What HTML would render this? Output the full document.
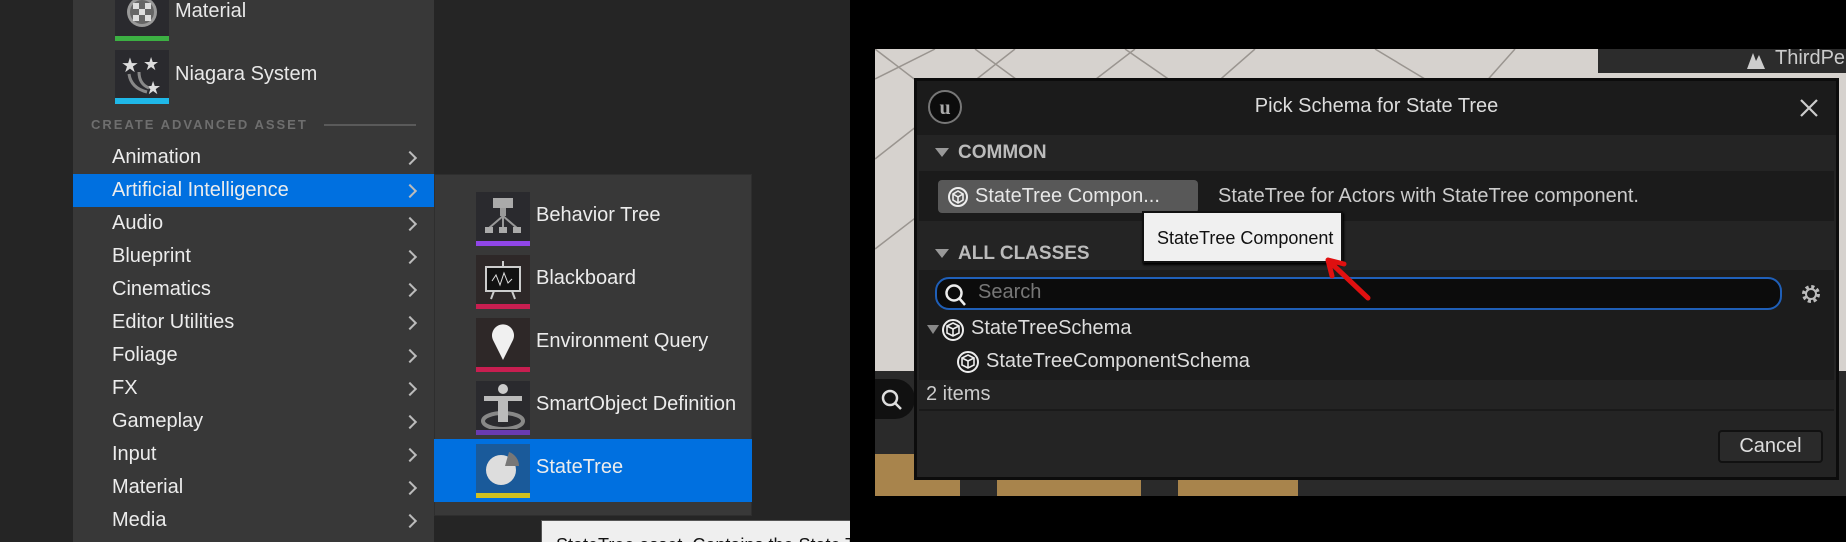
<!DOCTYPE html>
<html><head><meta charset="utf-8"><style>
*{margin:0;padding:0;box-sizing:border-box}
html,body{width:1846px;height:542px;overflow:hidden}
body{background:#000;font-family:"Liberation Sans",sans-serif;position:relative}
.a{position:absolute}
.t{color:#e8e8e8;font-size:20px;white-space:nowrap}
.row{position:absolute;left:73px;width:361px;height:33px}
.row span{position:absolute;left:39px;top:5px;color:#ececec;font-size:20px}
.row i{position:absolute;left:332px;top:12px;width:10px;height:10px;border-right:2px solid #bbb;border-top:2px solid #bbb;transform:rotate(45deg)}
.ic{position:absolute;left:476px;width:54px;height:54px;background:#2a2a2e}
.ic b{position:absolute;left:0;bottom:0;width:54px;height:5px}
.sub{position:absolute;left:536px;color:#ececec;font-size:20px}
</style></head><body>
<div class="a" style="left:0;top:0;width:850px;height:542px;background:#252525;overflow:hidden">
<div class="a" style="left:73px;top:0;width:361px;height:542px;background:#383838"></div>
<div class="a" style="left:115px;top:0;width:54px;height:41px;background:#2a2a2e">
<svg width="54" height="36"><circle cx="27" cy="12" r="15" fill="#999"/><circle cx="27" cy="12" r="12" fill="#666"/><rect x="18" y="3" width="6" height="6" fill="#ddd"/><rect x="30" y="3" width="6" height="6" fill="#ddd"/><rect x="24" y="9" width="6" height="6" fill="#ddd"/><rect x="18" y="15" width="6" height="6" fill="#ddd"/><rect x="30" y="15" width="6" height="6" fill="#ddd"/></svg>
<b class="a" style="left:0;bottom:0;width:54px;height:5px;background:#3cb043"></b></div>
<div class="a t" style="left:175px;top:0px">Material</div>
<div class="a" style="left:115px;top:50px;width:54px;height:54px;background:#2a2a2e">
<svg width="54" height="48"><text x="6" y="22" fill="#ddd" font-size="20">★</text><text x="28" y="20" fill="#ddd" font-size="18">★</text><text x="30" y="44" fill="#ddd" font-size="18">★</text><path d="M14 24 Q16 38 32 42 M24 22 Q24 34 34 38" stroke="#888" stroke-width="3" fill="none"/></svg>
<b class="a" style="left:0;bottom:0;width:54px;height:6px;background:#1fb8e8"></b></div>
<div class="a t" style="left:175px;top:63px">Niagara System</div>
<div class="a" style="left:91px;top:117px;color:#6e6e6e;font-size:13px;font-weight:bold;letter-spacing:2px">CREATE ADVANCED ASSET</div>
<div class="a" style="left:324px;top:124px;width:92px;height:2px;background:#5a5a5a"></div>
<div class="row" style="top:141px"><span>Animation</span><i></i></div>
<div class="row" style="top:174px;background:#0070e0"><span>Artificial Intelligence</span><i></i></div>
<div class="row" style="top:207px"><span>Audio</span><i></i></div>
<div class="row" style="top:240px"><span>Blueprint</span><i></i></div>
<div class="row" style="top:273px"><span>Cinematics</span><i></i></div>
<div class="row" style="top:306px"><span>Editor Utilities</span><i></i></div>
<div class="row" style="top:339px"><span>Foliage</span><i></i></div>
<div class="row" style="top:372px"><span>FX</span><i></i></div>
<div class="row" style="top:405px"><span>Gameplay</span><i></i></div>
<div class="row" style="top:438px"><span>Input</span><i></i></div>
<div class="row" style="top:471px"><span>Material</span><i></i></div>
<div class="row" style="top:504px"><span>Media</span><i></i></div>
<div class="a" style="left:434px;top:174px;width:318px;height:342px;background:#383838;border:1px solid #2e2e2e"></div>
<div class="a" style="left:434px;top:439px;width:318px;height:63px;background:#0070e0"></div>
<div class="ic" style="top:192px"><svg width="54" height="48"><rect x="17" y="6" width="20" height="10" fill="#aaa"/><rect x="24" y="16" width="6" height="8" fill="#999"/><path d="M27 24 L13 36 M27 24 V36 M27 24 L41 36" stroke="#999" stroke-width="2"/><rect x="9" y="35" width="8" height="6" fill="#aaa"/><rect x="23" y="35" width="8" height="6" fill="#aaa"/><rect x="37" y="35" width="8" height="6" fill="#aaa"/></svg><b style="background:#9046e8"></b></div>
<div class="ic" style="top:255px;background:#2e2828"><svg width="54" height="48"><rect x="10" y="12" width="34" height="24" fill="#111" stroke="#ccc" stroke-width="2"/><path d="M16 26 L20 20 L24 30 L28 18 L32 28 L36 24" stroke="#ddd" fill="none"/><path d="M27 6V12 M18 36 L15 44 M36 36 L39 44" stroke="#ccc" stroke-width="2"/></svg><b style="background:#c81e50"></b></div>
<div class="ic" style="top:318px;background:#2e2828"><svg width="54" height="48"><path d="M27 42 L17 22 A11 11 0 1 1 37 22 Z" fill="#f0f0f0"/></svg><b style="background:#c81e50"></b></div>
<div class="ic" style="top:381px"><svg width="54" height="48"><ellipse cx="27" cy="40" rx="20" ry="8" fill="none" stroke="#888" stroke-width="4"/><circle cx="27" cy="8" r="5" fill="#ccc"/><rect x="8" y="15" width="38" height="5" fill="#bbb"/><rect x="22" y="15" width="10" height="26" fill="#bbb"/></svg><b style="background:#6a3ab0"></b></div>
<div class="ic" style="top:444px;background:#1a5a9a"><svg width="54" height="48"><circle cx="25" cy="26" r="15" fill="#ddd"/><path d="M29 22 L33 8 A15 15 0 0 1 43 22 Z" fill="#777"/></svg><b style="background:#d0c020"></b></div>
<div class="sub" style="top:204px">Behavior Tree</div>
<div class="sub" style="top:267px">Blackboard</div>
<div class="sub" style="top:330px">Environment Query</div>
<div class="sub" style="top:393px">SmartObject Definition</div>
<div class="sub" style="top:456px">StateTree</div>
<div class="a" style="left:541px;top:520px;width:320px;height:30px;background:#efefef;border:1px solid #555"><span style="position:absolute;left:14px;top:14px;font-size:18px;color:#111;white-space:nowrap">StateTree asset. Contains the State Tree</span></div>
</div>
<div class="a" style="left:875px;top:49px;width:971px;height:447px;background:#d6d2ce;overflow:hidden">
<svg class="a" width="971" height="447" style="left:0;top:0"><g stroke="#9a9590" stroke-width="1.5"><path d="M0 30 L60 0 M0 110 L140 0 M0 200 L260 0 M100 0 L400 220 M0 0 L300 230 M250 0 L380 90 M380 0 L220 140 M500 0 L600 60 M640 0 L560 90"/></g></svg>
<div class="a" style="left:0;top:322px;width:971px;height:125px;background:#2a2a2a"></div>
<div class="a" style="left:0;top:330px;width:40px;height:40px;background:#111;border-radius:0 20px 20px 0"></div>
<svg class="a" style="left:4px;top:338px" width="26" height="26"><circle cx="11" cy="11" r="7" stroke="#ddd" stroke-width="2.5" fill="none"/><path d="M16 16 L22 22" stroke="#ddd" stroke-width="2.5"/></svg>
<div class="a" style="left:0;top:405px;width:85px;height:42px;background:#a8844c"></div>
<div class="a" style="left:122px;top:420px;width:144px;height:27px;background:#a8844c"></div>
<div class="a" style="left:303px;top:420px;width:120px;height:27px;background:#a8844c"></div>
<div class="a" style="left:723px;top:0;width:248px;height:24px;background:#2c2c2c"></div>
<div class="a" style="left:900px;top:-2px;color:#ccc;font-size:20px">ThirdPe</div>
<svg class="a" style="left:870px;top:2px" width="22" height="20"><path d="M2 18 L8 2 L11 10 L14 4 L20 18Z" fill="#ccc"/></svg>
</div>
<div class="a" style="left:914px;top:78px;width:925px;height:402px;background:#242424;border:3px solid #0c0c0c">
<div class="a" style="left:0;top:0;width:919px;height:54px;background:#1b1b1b"></div>
<svg class="a" style="left:10px;top:8px" width="36" height="36"><circle cx="18" cy="18" r="16" fill="#0c0c0c" stroke="#777" stroke-width="2"/><text x="18" y="25" fill="#aaa" font-size="20" font-weight="bold" text-anchor="middle" font-family="Liberation Serif">u</text></svg>
<div class="a" style="left:0;top:14px;width:919px;text-align:center;color:#ddd;font-size:20px">Pick Schema for State Tree</div>
<svg class="a" style="left:882px;top:17px" width="20" height="20"><path d="M2 2 L18 18 M18 2 L2 18" stroke="#ccc" stroke-width="2.2"/></svg>
<div class="a" style="left:18px;top:67px;width:0;height:0;border-left:7px solid transparent;border-right:7px solid transparent;border-top:9px solid #999"></div>
<div class="a" style="left:41px;top:61px;color:#bbb;font-size:19px;font-weight:bold">COMMON</div>
<div class="a" style="left:2px;top:90px;width:915px;height:50px;background:#1b1b1b"></div>
<div class="a" style="left:21px;top:99px;width:260px;height:33px;background:#585858;border-radius:4px"></div>
<svg class="a" style="left:30px;top:105px" width="22" height="22"><circle cx="11" cy="11" r="9" fill="none" stroke="#eee" stroke-width="2"/><path d="M11 5 L16 8 V14 L11 17 L6 14 V8 Z M6 8 L11 11 L16 8 M11 11 V17" stroke="#eee" stroke-width="1.6" fill="none"/></svg>
<div class="a t" style="left:58px;top:104px">StateTree Compon...</div>
<div class="a t" style="left:301px;top:104px;color:#ccc">StateTree for Actors with StateTree component.</div>
<div class="a" style="left:18px;top:168px;width:0;height:0;border-left:7px solid transparent;border-right:7px solid transparent;border-top:9px solid #999"></div>
<div class="a" style="left:41px;top:162px;color:#bbb;font-size:19px;font-weight:bold">ALL CLASSES</div>
<div class="a" style="left:2px;top:189px;width:915px;height:110px;background:#1c1c1c"></div>
<div class="a" style="left:18px;top:196px;width:847px;height:33px;background:#0c0c0c;border:2px solid #1f5fb8;border-radius:14px"></div>
<svg class="a" style="left:26px;top:201px" width="26" height="26"><circle cx="11" cy="11" r="7.5" stroke="#eee" stroke-width="2.5" fill="none"/><path d="M16 16 L22 23" stroke="#eee" stroke-width="2.5"/></svg>
<div class="a" style="left:61px;top:200px;color:#777;font-size:20px">Search</div>
<svg class="a" style="left:881px;top:200px" width="26" height="26"><circle cx="13" cy="13" r="7" fill="none" stroke="#bbb" stroke-width="4" stroke-dasharray="3 2.5"/><circle cx="13" cy="13" r="5" fill="none" stroke="#bbb" stroke-width="2"/></svg>
<div class="a" style="left:10px;top:244px;width:0;height:0;border-left:6px solid transparent;border-right:6px solid transparent;border-top:9px solid #888"></div>
<svg class="a" style="left:24px;top:236px" width="24" height="26"><circle cx="12" cy="13" r="10" fill="none" stroke="#eee" stroke-width="2"/><path d="M12 6 L18 9 V16 L12 19 L6 16 V9 Z M6 9 L12 12 L18 9 M12 12 V19" stroke="#eee" stroke-width="1.6" fill="none"/></svg>
<div class="a t" style="left:54px;top:236px;color:#ddd">StateTreeSchema</div>
<svg class="a" style="left:39px;top:268px" width="24" height="26"><circle cx="12" cy="13" r="10" fill="none" stroke="#eee" stroke-width="2"/><path d="M12 6 L18 9 V16 L12 19 L6 16 V9 Z M6 9 L12 12 L18 9 M12 12 V19" stroke="#eee" stroke-width="1.6" fill="none"/></svg>
<div class="a t" style="left:69px;top:269px;color:#ddd">StateTreeComponentSchema</div>
<div class="a" style="left:2px;top:299px;width:915px;height:31px;background:#232323;border-bottom:2px solid #1a1a1a"></div>
<div class="a t" style="left:9px;top:302px;color:#ccc">2 items</div>
<div class="a" style="left:801px;top:349px;width:105px;height:33px;background:#2a2a2a;border:2px solid #111;border-radius:4px;color:#ddd;font-size:20px;text-align:center;line-height:29px">Cancel</div>
</div>
<div class="a" style="left:1142px;top:211px;width:201px;height:52px;background:#f0f0f0;border:2px solid #111;box-shadow:1px 2px 2px #000"><span style="position:absolute;left:13px;top:15px;font-size:18px;color:#111;white-space:nowrap">StateTree Component</span></div>
<svg class="a" style="left:1310px;top:250px" width="70" height="60"><path d="M58 48 L20 12 M18 10 L34 14 M18 10 L22 26" stroke="#e01010" stroke-width="5" stroke-linecap="round" fill="none"/></svg>
</body></html>
